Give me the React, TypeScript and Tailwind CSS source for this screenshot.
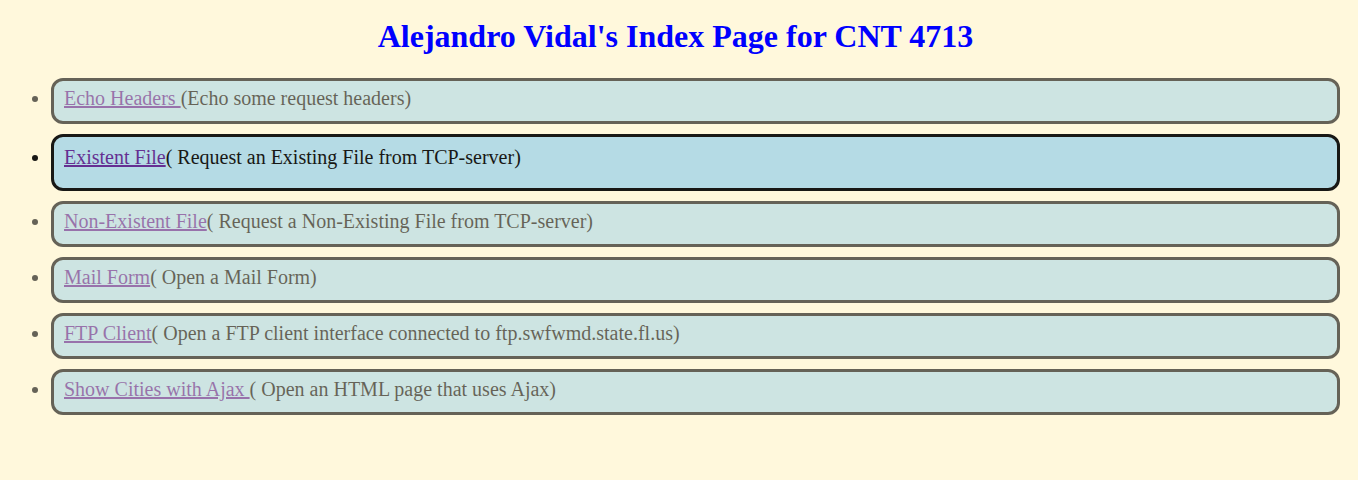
type Entry = {
  label: string;
  note: string;
  active?: boolean;
};

const entries: Entry[] = [
  { label: "Echo Headers ", note: "(Echo some request headers)" },
  { label: "Existent File", note: "( Request an Existing File from TCP-server)", active: true },
  { label: "Non-Existent File", note: "( Request a Non-Existing File from TCP-server)" },
  { label: "Mail Form", note: "( Open a Mail Form)" },
  { label: "FTP Client", note: "( Open a FTP client interface connected to ftp.swfwmd.state.fl.us)" },
  { label: "Show Cities with Ajax ", note: "( Open an HTML page that uses Ajax)" },
];

export default function App() {
  return (
    <div
      className="min-h-[480px] bg-[#fff8dc] text-black"
      style={{ fontFamily: '"Liberation Serif", "Times New Roman", serif' }}
    >
      <h1 className="pt-[18px] pr-[7px] text-center text-[32px] font-bold leading-[1.15] text-[#0000ff]">
        Alejandro Vidal's Index Page for CNT 4713
      </h1>
      <ul className="mt-[23px] flex list-disc flex-col gap-[10px] pl-[51px] pr-[18px]">
        {entries.map((entry) => (
          <li
            key={entry.label}
            className={`rounded-[12px] border-[3px] border-black bg-[#add8e6] px-[10px] text-[20px] leading-[23px] ${
              entry.active ? "pt-[9px] pb-[19px] opacity-90" : "pt-[6px] pb-[11px] opacity-60"
            }`}
          >
            <a href="#" className="text-[#551a8b] underline">
              {entry.label}
            </a>
            {entry.note}
          </li>
        ))}
      </ul>
    </div>
  );
}
